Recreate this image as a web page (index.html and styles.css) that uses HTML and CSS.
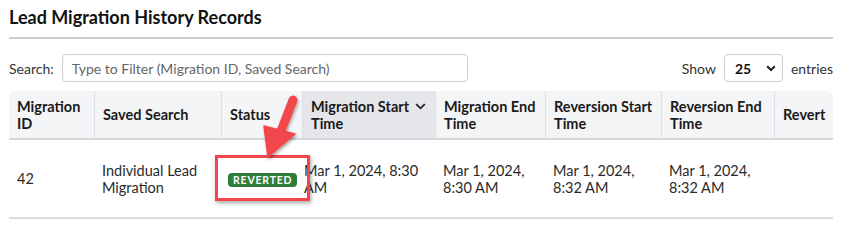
FILE: index.html
```html
<!DOCTYPE html>
<html lang="en">
<head>
    <meta charset="UTF-8">
    <title>Lead Migration History Records</title>
    <link rel="stylesheet" href="styles.css">
</head>
<body>
    <div class="page">
        <h1 class="title">Lead Migration History Records</h1>

        <div class="toolbar">
            <label class="search">
                <span>Search:</span>
                <input type="text" placeholder="Type to Filter (Migration ID, Saved Search)">
            </label>
            <div class="length">
                <span>Show</span>
                <div class="select">
                    <span>25</span>
                    <svg width="10" height="7" viewBox="0 0 10 7"><path d="M1.2 1.3 L5 5 L8.8 1.3" fill="none" stroke="#222" stroke-width="2"/></svg>
                </div>
                <span>entries</span>
            </div>
        </div>

        <div class="table-wrap">
            <table class="records">
                <colgroup>
                    <col style="width:85px">
                    <col style="width:127px">
                    <col style="width:81px">
                    <col style="width:133px">
                    <col style="width:110px">
                    <col style="width:116px">
                    <col style="width:113px">
                    <col style="width:59px">
                </colgroup>
                <thead>
                    <tr>
                        <th>Migration ID</th>
                        <th>Saved Search</th>
                        <th>Status</th>
                        <th class="sorted">Migration Start <svg class="sort" width="11" height="7" viewBox="0 0 11 7"><path d="M1.2 1.2 L5.5 5.3 L9.8 1.2" fill="none" stroke="#222" stroke-width="1.8"/></svg><br>Time</th>
                        <th>Migration End Time</th>
                        <th>Reversion Start Time</th>
                        <th>Reversion End Time</th>
                        <th>Revert</th>
                    </tr>
                </thead>
                <tbody>
                    <tr>
                        <td>42</td>
                        <td>Individual Lead Migration</td>
                        <td><span class="badge">REVERTED</span></td>
                        <td>Mar 1, 2024, 8:30 AM</td>
                        <td>Mar 1, 2024,<br>8:30 AM</td>
                        <td>Mar 1, 2024,<br>8:32 AM</td>
                        <td>Mar 1, 2024,<br>8:32 AM</td>
                        <td></td>
                    </tr>
                </tbody>
            </table>

            <!-- annotation -->
            <div class="callout"></div>
            <svg class="arrow" width="60" height="80" viewBox="0 0 60 80">
                <defs>
                    <filter id="sh" x="-30%" y="-30%" width="160%" height="160%">
                        <feDropShadow dx="1" dy="2" stdDeviation="1.5" flood-color="#000" flood-opacity="0.35"/>
                    </filter>
                </defs>
                <g filter="url(#sh)" fill="#f2464c" stroke="#f2464c">
                    <line x1="43" y1="9" x2="31" y2="40" stroke-width="9" stroke-linecap="round"/>
                    <polygon points="14,35 45,43 18,66" stroke-width="1.5" stroke-linejoin="round"/>
                </g>
            </svg>
        </div>
    </div>
</body>
</html>
```

FILE: styles.css
```css
* {
    margin: 0;
    padding: 0;
    box-sizing: border-box;
}

body {
    background: #fff;
    color: #222;
    font-family: Lato, "Liberation Sans", sans-serif;
    font-size: 14px;
}

.page {
    width: 824px;
    margin-left: 9px;
}

.title {
    font-size: 18px;
    font-weight: 700;
    line-height: 24px;
    padding-top: 5px;
    padding-bottom: 8px;
    border-bottom: 2px solid #c9cbce;
    color: #111;
}

.toolbar {
    display: flex;
    justify-content: space-between;
    align-items: center;
    margin-top: 15px;
    height: 28px;
}

.search {
    display: flex;
    align-items: center;
    gap: 8px;
    color: #333;
}

.search input {
    width: 406px;
    height: 28px;
    border: 1px solid #c8cbcf;
    border-radius: 4px;
    padding: 0 9px;
    font-family: inherit;
    font-size: 14px;
    outline: none;
}

.search input::placeholder {
    color: #666;
}

.length {
    display: flex;
    align-items: center;
    gap: 8px;
    color: #333;
}

.select {
    width: 59px;
    height: 28px;
    border: 1px solid #c8cbcf;
    border-radius: 4px;
    display: flex;
    align-items: center;
    justify-content: space-between;
    padding: 0 6px 0 10px;
    font-weight: 700;
    color: #111;
}

.table-wrap {
    position: relative;
    margin-top: 9px;
}

.records {
    width: 824px;
    table-layout: fixed;
    border-collapse: separate;
    border-spacing: 0;
}

.records th {
    background: #f4f5f7;
    text-align: left;
    vertical-align: middle;
    font-weight: 700;
    font-size: 14.5px;
    line-height: 17px;
    height: 49px;
    padding: 6px 8px;
    color: #1a1a1a;
    border-left: 1px solid #dcdfe3;
    border-bottom: 2px solid #d3d6da;
}

.records th:first-child {
    border-left: none;
    border-top-left-radius: 6px;
}

.records th:last-child {
    border-top-right-radius: 6px;
}

.records th.sorted {
    background: #e4e6e9;
}

.sort {
    margin-left: 2px;
    vertical-align: 2px;
}

.records td {
    height: 79px;
    padding: 0 8px;
    vertical-align: middle;
    font-size: 14.5px;
    line-height: 17px;
    color: #2a2a2a;
    border-bottom: 2px solid #d9dcdf;
}

.records td:nth-child(4) {
    padding-left: 2px;
}

.badge {
    display: inline-block;
    margin-left: -1px;
    background: #2f7d3c;
    color: #fff;
    font-size: 10.5px;
    font-weight: 700;
    letter-spacing: 0.8px;
    line-height: 14px;
    padding: 0 5px;
    border-radius: 4px;
}

.callout {
    position: absolute;
    left: 206px;
    top: 64px;
    width: 95px;
    height: 46px;
    border: 3px solid #f2464c;
    box-shadow: 1px 2px 4px rgba(0, 0, 0, 0.35);
}

.arrow {
    position: absolute;
    left: 241px;
    top: 0;
}
```
